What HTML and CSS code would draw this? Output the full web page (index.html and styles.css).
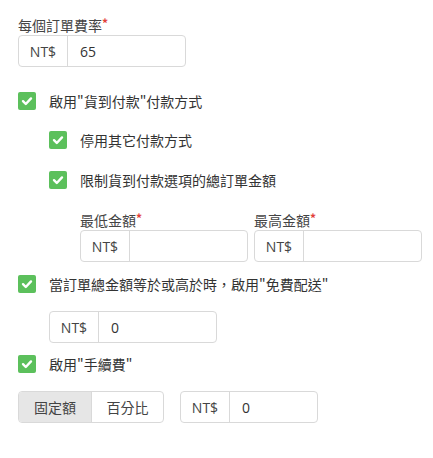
FILE: index.html
```html
<!DOCTYPE html>
<html lang="zh-Hant">
<head>
<meta charset="utf-8">
<link rel="stylesheet" href="styles.css">
</head>
<body>
<div class="page">
  <div class="field">
    <div class="label">每個訂單費率<span class="req">*</span></div>
    <div class="igroup">
      <span class="addon">NT$</span>
      <span class="ival">65</span>
    </div>
  </div>

  <div class="check row1">
    <span class="box"><svg viewBox="0 0 18 18"><path d="M5 9.2 L7.8 12 L13 6.4" /></svg></span>
    <span class="ctext">啟用"貨到付款"付款方式</span>
  </div>

  <div class="sub">
    <div class="check row2">
      <span class="box"><svg viewBox="0 0 18 18"><path d="M5 9.2 L7.8 12 L13 6.4" /></svg></span>
      <span class="ctext">停用其它付款方式</span>
    </div>
    <div class="check row3">
      <span class="box"><svg viewBox="0 0 18 18"><path d="M5 9.2 L7.8 12 L13 6.4" /></svg></span>
      <span class="ctext">限制貨到付款選項的總訂單金額</span>
    </div>
    <div class="range">
      <div class="col">
        <div class="label">最低金額<span class="req">*</span></div>
        <div class="igroup">
          <span class="addon">NT$</span>
          <span class="ival"></span>
        </div>
      </div>
      <div class="col">
        <div class="label">最高金額<span class="req">*</span></div>
        <div class="igroup">
          <span class="addon">NT$</span>
          <span class="ival"></span>
        </div>
      </div>
    </div>
  </div>

  <div class="check row4">
    <span class="box"><svg viewBox="0 0 18 18"><path d="M5 9.2 L7.8 12 L13 6.4" /></svg></span>
    <span class="ctext">當訂單總金額等於或高於時，啟用"免費配送"</span>
  </div>
  <div class="indent free">
    <div class="igroup">
      <span class="addon">NT$</span>
      <span class="ival">0</span>
    </div>
  </div>

  <div class="check row5">
    <span class="box"><svg viewBox="0 0 18 18"><path d="M5 9.2 L7.8 12 L13 6.4" /></svg></span>
    <span class="ctext">啟用"手續費"</span>
  </div>

  <div class="fee">
    <div class="btngroup">
      <span class="btn active">固定額</span>
      <span class="btn">百分比</span>
    </div>
    <div class="igroup small">
      <span class="addon">NT$</span>
      <span class="ival">0</span>
    </div>
  </div>
</div>
</body>
</html>
```

FILE: styles.css
```css
html, body {
  margin: 0;
  padding: 0;
  background: #ffffff;
}
body {
  font-family: "Noto Sans", "Open Sans", "Noto Sans CJK TC", sans-serif;
  font-size: 14px;
  color: #333333;
}
.page {
  padding: 15px 11px 0 18px;
  display: flex;
  flex-direction: column;
}
.label {
  font-family: "Noto Sans CJK TC", sans-serif;
  line-height: 20px;
  height: 20px;
  color: #444444;
}
.req {
  color: #e2403a;
  font-size: 12px;
  font-weight: bold;
  vertical-align: top;
  position: relative;
  top: -2px;
}
.igroup {
  display: flex;
  width: 168px;
  height: 32px;
  box-sizing: border-box;
  border: 1px solid #d9d9d9;
  border-radius: 4px;
  background: #fff;
}
.igroup.small {
  width: 138px;
}
.addon {
  width: 48px;
  flex: none;
  border-right: 1px solid #d9d9d9;
  display: flex;
  align-items: center;
  justify-content: center;
  color: #444444;
  font-family: "Open Sans", "Noto Sans", sans-serif;
}
.ival {
  flex: 1;
  display: flex;
  align-items: center;
  padding-left: 12px;
  color: #333;
  font-family: "Open Sans", "Noto Sans", sans-serif;
}
.check {
  display: flex;
  align-items: center;
  height: 18px;
}
.box {
  width: 18px;
  height: 18px;
  border-radius: 2px;
  background: #5cc05c;
  display: flex;
  flex: none;
  margin-right: 13px;
}
.box svg {
  width: 18px;
  height: 18px;
}
.box path {
  fill: none;
  stroke: #ffffff;
  stroke-width: 2.4;
  stroke-linecap: round;
  stroke-linejoin: round;
}
.ctext {
  font-family: "Noto Sans CJK TC", sans-serif;
  line-height: 20px;
  color: #333;
}
.row1 { margin-top: 25px; }
.sub {
  padding-left: 31px;
  display: flex;
  flex-direction: column;
}
.row2 { margin-top: 21px; }
.row3 { margin-top: 22px; }
.range {
  margin-top: 21px;
  padding-left: 31px;
  display: flex;
  gap: 6px;
}
.row4 { margin-top: 13px; }
.indent {
  padding-left: 31px;
}
.free { margin-top: 18px; }
.row5 { margin-top: 12px; }
.fee {
  margin-top: 18px;
  display: flex;
  gap: 16px;
}
.btngroup {
  display: flex;
  height: 32px;
  box-sizing: border-box;
  border: 1px solid #d9d9d9;
  border-radius: 4px;
  overflow: hidden;
}
.btn {
  display: flex;
  align-items: center;
  justify-content: center;
  font-family: "Noto Sans CJK TC", sans-serif;
  color: #444;
  width: 71px;
}
.btn.active {
  width: 72px;
  background: #e6e6e6;
  border-right: 1px solid #d9d9d9;
}
```
